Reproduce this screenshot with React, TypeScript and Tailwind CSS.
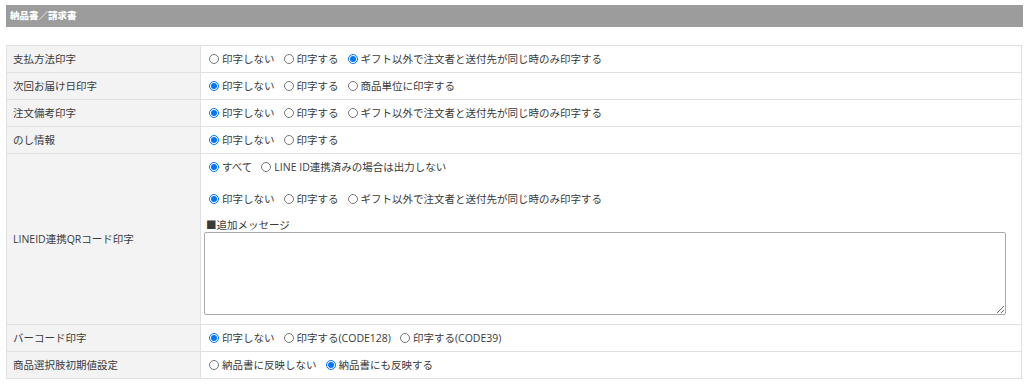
import React from "react";

type Opt = { label: string; checked?: boolean };

function Radio({ name, opts }: { name: string; opts: Opt[] }) {
  return (
    <div className="flex items-center h-[16px]">
      {opts.map((o, i) => (
        <label key={i} className={`flex items-center ${i > 0 ? "ml-[9px]" : ""}`}>
          <input
            type="radio"
            name={name}
            defaultChecked={o.checked}
            className="m-0 w-[10px] h-[10px]"
          />
          <span className="ml-[3px]">{o.label}</span>
        </label>
      ))}
    </div>
  );
}

function Row({
  label,
  children,
  first,
  tall,
}: {
  label: string;
  children: React.ReactNode;
  first?: boolean;
  tall?: boolean;
}) {
  return (
    <div className={`flex ${first ? "" : "border-t border-[#e0e0e0]"}`}>
      <div className="w-[194px] shrink-0 bg-[#f3f3f3] border-r border-[#e0e0e0] flex items-center pl-[6px]">
        {label}
      </div>
      <div className={`flex-1 ${tall ? "" : "h-[26px] flex items-center"} pl-[8px]`}>
        {children}
      </div>
    </div>
  );
}

export default function App() {
  const none = { label: "印字しない" };
  const print = { label: "印字する" };
  const gift = { label: "ギフト以外で注文者と送付先が同じ時のみ印字する" };

  return (
    <div
      className="bg-white w-[1024px] h-[386px] pt-[5px] pl-[6px] pr-[1px] text-[10.5px] leading-[16px] text-[#3a3a3a]"
      style={{ fontFamily: '"Open Sans", "Noto Sans CJK JP", sans-serif' }}
    >
      <div className="h-[22px] bg-[#9c9c9c] flex items-center pl-[4px] text-white font-black text-[9.5px]">
        納品書／請求書
      </div>

      <div className="mt-[18px] mr-[1px] border border-[#e0e0e0]">
        <Row label="支払方法印字" first>
          <Radio name="pay" opts={[none, print, { ...gift, checked: true }]} />
        </Row>
        <Row label="次回お届け日印字">
          <Radio
            name="next"
            opts={[{ ...none, checked: true }, print, { label: "商品単位に印字する" }]}
          />
        </Row>
        <Row label="注文備考印字">
          <Radio name="memo" opts={[{ ...none, checked: true }, print, gift]} />
        </Row>
        <Row label="のし情報">
          <Radio name="noshi" opts={[{ ...none, checked: true }, print]} />
        </Row>
        <Row label="LINEID連携QRコード印字" tall>
          <div className="pt-[5px] pb-[9px]">
            <Radio
              name="lineall"
              opts={[{ label: "すべて", checked: true }, { label: "LINE ID連携済みの場合は出力しない" }]}
            />
            <div className="mt-[16px]">
              <Radio name="lineqr" opts={[{ ...none, checked: true }, print, gift]} />
            </div>
            <div className="mt-[11px] h-[14px] leading-[14px] -ml-[3px]">■追加メッセージ</div>
            <textarea className="block -ml-[5px] w-[802px] h-[83px] border border-[#a9a9a9] rounded-[2px] bg-white" />
          </div>
        </Row>
        <Row label="バーコード印字">
          <Radio
            name="barcode"
            opts={[{ ...none, checked: true }, { label: "印字する(CODE128)" }, { label: "印字する(CODE39)" }]}
          />
        </Row>
        <Row label="商品選択肢初期値設定">
          <Radio
            name="option"
            opts={[{ label: "納品書に反映しない" }, { label: "納品書にも反映する", checked: true }]}
          />
        </Row>
      </div>
    </div>
  );
}
